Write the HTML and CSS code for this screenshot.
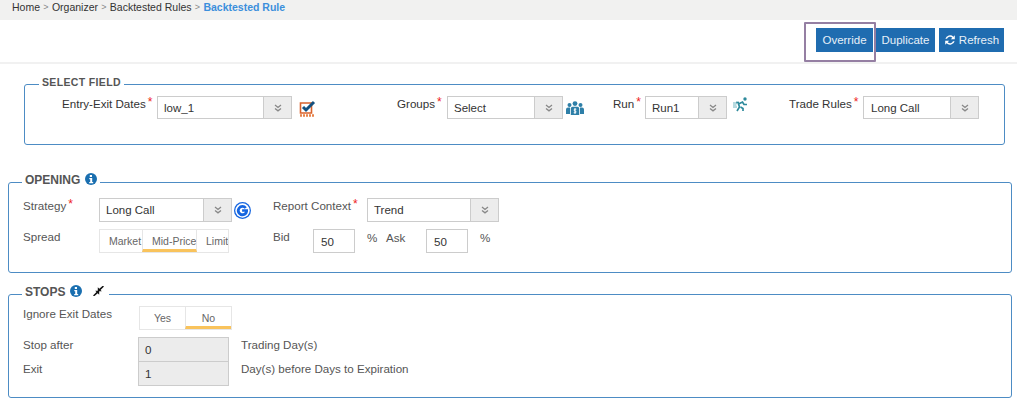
FILE: index.html
```html
<!DOCTYPE html>
<html lang="en">
<head>
<meta charset="utf-8">
<title>Backtested Rule</title>
<link rel="stylesheet" href="styles.css">
</head>
<body>
<nav class="crumbs">
  <span>Home</span><i>&gt;</i><span>Organizer</span><i>&gt;</i><span>Backtested Rules</span><i>&gt;</i><b>Backtested Rule</b>
</nav>
<header class="toolbar">
  <button class="btn btn-override">Override<span class="highlight"></span></button>
  <button class="btn btn-dup">Duplicate</button>
  <button class="btn btn-refresh">
    <svg class="ico-refresh" viewBox="0 0 14 14" width="12" height="12"><path d="M1.6 5.6A5.6 5.6 0 0 1 11 3.2L12.6 1.6V6.2H8L9.7 4.5A3.7 3.7 0 0 0 3.5 5.6ZM12.4 8.4A5.6 5.6 0 0 1 3 10.8L1.4 12.4V7.8H6L4.3 9.5A3.7 3.7 0 0 0 10.5 8.4Z" fill="#fff"/></svg>
    Refresh</button>
</header>

<fieldset class="box box-select">
  <legend>SELECT FIELD</legend>
  <div class="select-row">
    <label class="lbl lbl-dates">Entry-Exit Dates<em>*</em></label>
    <div class="select s-dates"><span>low_1</span><u><svg viewBox="0 0 8 8" width="8" height="8"><path d="M1 1l3 2.4L7 1M1 4.4l3 2.4 3-2.4" fill="none" stroke="#888" stroke-width="1.3"/></svg></u></div>
    <svg class="ico ico-check" viewBox="0 0 17 18" width="17" height="18"><path d="M1.5 3h11v10h-11z" fill="#fff" stroke="#d9622b" stroke-width="1.6"/><path d="M4 7l3 3 8-8" fill="none" stroke="#14507f" stroke-width="3"/><path d="M1 15.500h15" stroke="#e8834a" stroke-width="2.400" stroke-dasharray="2 1"/></svg>
    <label class="lbl lbl-groups">Groups<em>*</em></label>
    <div class="select s-groups"><span>Select</span><u><svg viewBox="0 0 8 8" width="8" height="8"><path d="M1 1l3 2.4L7 1M1 4.4l3 2.4 3-2.4" fill="none" stroke="#888" stroke-width="1.3"/></svg></u></div>
    <svg class="ico ico-groups" viewBox="0 0 18 14" width="18" height="14"><g fill="#2e7fa8"><circle cx="9" cy="2.600" r="2.400"/><circle cx="3.500" cy="4" r="2"/><circle cx="14.500" cy="4" r="2"/><path d="M0 13V8.500Q0 6.500 2 6.500H4V13ZM14 6.500H16Q18 6.500 18 8.500V13H14Z"/><path d="M4.800 14V7.500Q4.800 5.800 6.500 5.800H11.500Q13.200 5.800 13.200 7.500V14Z"/></g><path d="M9 7v6M10.300 8.200H8.300V10H9.800V11.700H7.700" stroke="#fff" stroke-width=".9" fill="none"/></svg>
    <label class="lbl lbl-run">Run<em>*</em></label>
    <div class="select s-run"><span>Run1</span><u><svg viewBox="0 0 8 8" width="8" height="8"><path d="M1 1l3 2.4L7 1M1 4.4l3 2.4 3-2.4" fill="none" stroke="#888" stroke-width="1.3"/></svg></u></div>
    <svg class="ico ico-run" viewBox="0 0 15 15" width="15" height="15"><g fill="none" stroke="#2e8a9c" stroke-width="1.700"><path d="M4 14l2.500-4-1-3 4-2 1.500 2.500h3"/><path d="M6 5.500h-3"/><path d="M7.500 10l2.500 1.500v2.500"/></g><circle cx="12" cy="2" r="1.700" fill="#2e8a9c"/><path d="M0 6h4M0 8h3.500M0 10h4" stroke="#6fb4c0"/></svg>
    <label class="lbl lbl-rules">Trade Rules<em>*</em></label>
    <div class="select s-rules"><span>Long Call</span><u><svg viewBox="0 0 8 8" width="8" height="8"><path d="M1 1l3 2.4L7 1M1 4.4l3 2.4 3-2.4" fill="none" stroke="#888" stroke-width="1.3"/></svg></u></div>
  </div>
</fieldset>

<fieldset class="box box-opening">
  <legend>OPENING <svg class="ico-info" viewBox="0 0 12 12" width="12" height="12"><circle cx="6" cy="6" r="6" fill="#1a6fb0"/><path d="M4.800 2h2.200v2H4.800zM4.300 5h2.900v4h1v1.200H4.200V9h1V6.200h-.9z" fill="#fff"/></svg></legend>
  <div class="grid-opening">
    <label class="lbl2">Strategy<em>*</em></label>
    <div class="with-icon">
      <div class="select s-strategy"><span>Long Call</span><u><svg viewBox="0 0 8 8" width="8" height="8"><path d="M1 1l3 2.4L7 1M1 4.4l3 2.4 3-2.4" fill="none" stroke="#888" stroke-width="1.3"/></svg></u></div>
      <svg class="ico-g" viewBox="0 0 17 17" width="17" height="17"><circle cx="8.500" cy="8.500" r="8.500" fill="#1565e0"/><circle cx="8.500" cy="8.500" r="7.200" fill="#fff"/><path d="M12.800 5.200A5.600 5.600 0 1 0 14 9.400V7.300H8.100v2.500h2.900A2.800 2.800 0 1 1 10.700 6.800Z" fill="#1565e0"/></svg>
    </div>
    <label class="lbl2 lbl-ctx">Report Context<em>*</em></label>
    <div class="select s-ctx"><span>Trend</span><u><svg viewBox="0 0 8 8" width="8" height="8"><path d="M1 1l3 2.4L7 1M1 4.4l3 2.4 3-2.4" fill="none" stroke="#888" stroke-width="1.3"/></svg></u></div>

    <label class="lbl2 second">Spread</label>
    <div class="seg seg-spread">
      <span class="s-market">Market</span><span class="on s-mid">Mid-Price</span><span class="s-limit">Limit</span>
    </div>
    <div class="bidask">
      <label class="lbl2 lbl-bid">Bid</label>
      <div class="input">50</div><span class="pct">%</span><span class="ask">Ask</span><div class="input">50</div><span class="pct">%</span>
    </div>
  </div>
</fieldset>

<fieldset class="box box-stops">
  <legend>STOPS <svg class="ico-info" viewBox="0 0 12 12" width="12" height="12"><circle cx="6" cy="6" r="6" fill="#1a6fb0"/><path d="M4.800 2h2.200v2H4.800zM4.300 5h2.900v4h1v1.200H4.200V9h1V6.200h-.9z" fill="#fff"/></svg><svg class="ico-compress" viewBox="0 0 11 10" width="11" height="10"><path d="M0 9.500 3.500 6 2.200 4.700H6.200V8.700L4.700 7.200 1.200 10.300ZM11 .5 7.500 4 8.800 5.300H4.800V1.300L6.300 2.800 9.800-.3Z" fill="#111"/></svg></legend>
  <div class="stops-row row-ignore">
    <label class="lbl3">Ignore Exit Dates</label>
    <div class="seg seg-yn"><span>Yes</span><span class="on">No</span></div>
  </div>
  <div class="stops-row row-after">
    <label class="lbl3">Stop after</label>
    <div class="input ro">0</div>
    <span class="note">Trading Day(s)</span>
  </div>
  <div class="stops-row row-exit">
    <label class="lbl3">Exit</label>
    <div class="input ro">1</div>
    <span class="note">Day(s) before Days to Expiration</span>
  </div>
</fieldset>
</body>
</html>
```

FILE: styles.css
```css
* { box-sizing: border-box; }
html, body { margin: 0; padding: 0; }
body {
  width: 1017px;
  height: 405px;
  overflow: hidden;
  background: #fff;
  font-family: "Liberation Sans", Arial, sans-serif;
  font-size: 11.6px;
  color: #555;
}

/* Breadcrumb */
.crumbs {
  height: 20px;
  background: #f1f1f0;
  padding: 1px 0 0 12px;
  line-height: 13px;
  font-size: 10.500px;
  color: #333;
  display: flex;
}
.crumbs i { font-style: normal; color: #888; margin: 0 3.300px; font-size: 9px; }
.crumbs b { color: #3b8fdc; font-weight: bold; }

/* Toolbar */
.toolbar {
  height: 44px;
  border-bottom: 2px solid #f1f1f1;
  display: flex;
  justify-content: flex-end;
  padding: 8px 13px 0 0;
  gap: 3px;
}
.btn {
  position: relative;
  height: 24px;
  border: 0;
  background: #1f6cb0;
  color: #e8f0f8;
  font: 11.5px "Liberation Sans", Arial, sans-serif;
  padding: 0;
  display: flex;
  align-items: center;
  justify-content: center;
  gap: 3px;
}
.btn-override { width: 57px; }
.btn-dup { width: 59px; }
.btn-refresh { width: 65px; margin-left: 1px; }
.highlight {
  position: absolute;
  left: -12px;
  top: -6px;
  width: 72px;
  height: 40px;
  border: 2px solid #957fa3;
  border-radius: 1px;
  pointer-events: none;
}

/* Fieldsets */
.box {
  border: 1px solid #4d8cc4;
  border-radius: 3px;
  margin: 0;
  padding: 0;
  min-width: 0;
}
.box legend {
  font-weight: bold;
  color: #555;
  padding: 0 3px 4px;
  line-height: 13px;
}
.box-select {
  margin: 12px 12px 0 24px;
  height: 69px;
}
.box-select legend { margin-left: 14px; font-size: 10.500px; letter-spacing: .35px; }
.box-opening {
  margin: 28px 5px 0 8px;
  height: 100px;
}
.box-opening legend, .box-stops legend { margin-left: 13px; font-size: 12px; }
.box-stops {
  margin: 12px 5px 0 8px;
  height: 113px;
}
.ico-info { vertical-align: -1px; margin-left: 1px; }
.ico-compress { vertical-align: 0; margin: 0 2px 0 11px; }

/* Select row */
.select-row {
  display: flex;
  align-items: flex-start;
  padding: 3px 0 0 37px;
}
.lbl { color: #333; margin-top: 1px; line-height: 14px; white-space: nowrap; }
.lbl em, .lbl2 em { color: #e22; font-style: normal; font-size: 12px; margin-left: 2px; vertical-align: 2px; line-height: 0; }
.lbl-dates { width: 95px; }
.lbl-groups { width: 50px; margin-left: 81px; }
.lbl-run { width: 32px; margin-left: 29px; }
.lbl-rules { width: 74px; margin-left: 41px; }

.select {
  height: 24px;
  border: 1px solid #ccc;
  background: #fff;
  display: flex;
  align-items: center;
  justify-content: space-between;
  color: #333;
  font-size: 11.500px;
  padding-left: 6px;
}
.select-row .select { height: 23px; }
.select-row .s-rules { padding-left: 7px; }
.select u {
  width: 28px;
  height: 100%;
  background: #ececec;
  border-left: 1px solid #ccc;
  display: flex;
  align-items: center;
  justify-content: center;
}
.s-dates { width: 135px; }
.s-groups { width: 116px; }
.s-run { width: 82px; }
.s-rules { width: 116px; }
.s-strategy { width: 133px; }
.s-ctx { width: 132px; }
.ico { flex: none; margin-top: 3px; }
.ico-check { margin-left: 7px; margin-top: 4px; }
.ico-groups { margin-left: 3px; margin-top: 5px; }
.ico-run { margin-left: 6px; margin-top: 1px; }

/* Opening */
.grid-opening {
  display: grid;
  grid-template-columns: 76px 174px 94px 132px;
  grid-template-rows: 24px 24px;
  row-gap: 7px;
  padding: 7px 0 0 14px;
  align-items: start;
}
.lbl2 { color: #555; line-height: 14px; white-space: nowrap; margin-top: 0; }
.grid-opening > .lbl2:not(.second) { margin-top: 1px; }
.with-icon { display: flex; align-items: center; gap: 2px; }
.ico-g { flex: none; }
.second { margin-top: 1px; }

.seg { display: flex; height: 24px; border: 1px solid #e6e6e6; background: #fff; }
.seg span {
  display: flex;
  align-items: center;
  color: #666;
  font-size: 10.500px;
  white-space: nowrap;
  overflow: hidden;
}
.seg .on { border-bottom: 3px solid #f9c35c; border-left: 1px solid #e6e6e6; border-right: 1px solid #e6e6e6; color: #666; padding-top: 2px; }
.seg-spread { width: 130px; }
.seg-spread span { padding-left: 9px; }
.s-market { width: 42px; }
.s-mid { width: 55px; }
.s-limit { width: 31px; }
.seg-yn { width: 93px; }
.seg-yn span { width: 46px; justify-content: center; }
.seg-yn .on { border-right: 0; width: 47px; }

.bidask { display: flex; align-items: flex-start; grid-column: 3 / 5; white-space: nowrap; }
.lbl-bid { width: 40px; flex: none; margin-top: 1px; }
.input {
  width: 42px;
  height: 24px;
  border: 1px solid #ccc;
  background: #fff;
  color: #333;
  display: flex;
  align-items: center;
  padding-left: 7px;
  flex: none;
}
.pct { margin: 2px 0 0 12px; width: 19px; flex: none; }
.ask { width: 40px; margin-top: 2px; flex: none; }

/* Stops */
.stops-row { display: flex; align-items: flex-start; padding-left: 14px; }
.row-ignore { margin-top: 3px; }
.row-after { margin-top: 7px; }
.lbl3 { width: 115px; flex: none; line-height: 14px; margin-top: 1px; }
.row-ignore .lbl3 { margin-top: 1px; width: 116px; }
.input.ro { width: 91px; background: #ececec; border-color: #ccc; height: 25px; padding-left: 6px; }
.row-exit { margin-top: -1px; }
.note { margin: 1px 0 0 12px; line-height: 14px; }
```
